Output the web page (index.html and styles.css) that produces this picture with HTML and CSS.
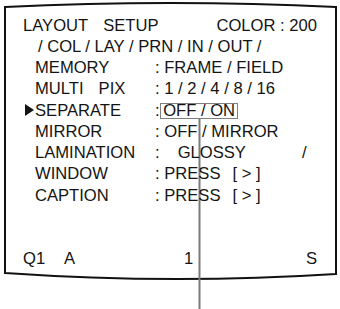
FILE: index.html
```html
<!DOCTYPE html>
<html>
<head>
<meta charset="utf-8">
<link rel="stylesheet" href="styles.css">
</head>
<body>
<div class="screen">
  <svg class="frame" width="340" height="309" viewBox="0 0 340 309">
    <path d="M5,7 Q170.5,-1 336,7 L336,274 Q170.5,284.5 5,273 Z" fill="none" stroke="#111" stroke-width="2"/>
    <line x1="199.5" y1="118" x2="199.5" y2="309" stroke="#7a7a7a" stroke-width="2"/>
  </svg>
  <div class="menu">
    <div class="row head">
      <span>LAYOUT<span class="gap15"></span>SETUP</span>
      <span>COLOR : 200</span>
    </div>
    <div class="row tabs">/ COL / LAY / PRN / IN / OUT /</div>
    <div class="row item"><span class="mark"></span><span class="label">MEMORY</span><span class="val">: FRAME / FIELD</span></div>
    <div class="row item"><span class="mark"></span><span class="label">MULTI<span class="gap15"></span>PIX</span><span class="val">: 1 / 2 / 4 / 8 / 16</span></div>
    <div class="row item"><span class="mark"><span class="tri"></span></span><span class="label">SEPARATE</span><span class="val">:<span class="sel">OFF / ON</span></span></div>
    <div class="row item"><span class="mark"></span><span class="label">MIRROR</span><span class="val">: OFF / MIRROR</span></div>
    <div class="row item"><span class="mark"></span><span class="label">LAMINATION</span><span class="val">:<span class="gloss">GLOSSY</span><span class="slash">/</span></span></div>
    <div class="row item"><span class="mark"></span><span class="label">WINDOW</span><span class="val">: PRESS<span class="br">[ &gt; ]</span></span></div>
    <div class="row item"><span class="mark"></span><span class="label">CAPTION</span><span class="val">: PRESS<span class="br">[ &gt; ]</span></span></div>
    <div class="row status">
      <span class="q">Q1</span><span class="a">A</span><span class="n">1</span><span class="fill"></span><span>S</span>
    </div>
  </div>
</div>
</body>
</html>
```
FILE: styles.css
```css
html, body {
  margin: 0;
  padding: 0;
  background: #fff;
}
.screen {
  position: relative;
  width: 340px;
  height: 309px;
  overflow: hidden;
}
.frame {
  position: absolute;
  left: 0;
  top: 0;
}
.menu {
  position: relative;
  padding: 14.7px 23px 0 23px;
  font-family: "Liberation Sans", Arial, sans-serif;
  font-size: 16.6px;
  line-height: 21.25px;
  color: #141414;
  white-space: nowrap;
}
.row {
  display: flex;
  height: 21.25px;
}
.head {
  justify-content: space-between;
}
.gap15 {
  display: inline-block;
  width: 15px;
}
.tabs {
  padding-left: 15px;
}
.mark {
  width: 12px;
  display: flex;
  align-items: flex-start;
}
.tri {
  display: block;
  width: 0;
  height: 0;
  margin-left: 2px;
  margin-top: 4.5px;
  border-top: 6px solid transparent;
  border-bottom: 6px solid transparent;
  border-left: 9px solid #141414;
}
.label {
  width: 120px;
}
.sel {
  display: inline-block;
  line-height: 14px;
  border: 1.5px solid #808080;
  padding: 0 2px;
  margin-left: 0.5px;
}
.gloss {
  margin-left: 18px;
}
.slash {
  margin-left: 56px;
}
.br {
  margin-left: 12px;
}
.status {
  margin-top: 41.75px;
}
.q {
  width: 41px;
}
.a {
  width: 120px;
}
.fill {
  flex: 1;
}
```
